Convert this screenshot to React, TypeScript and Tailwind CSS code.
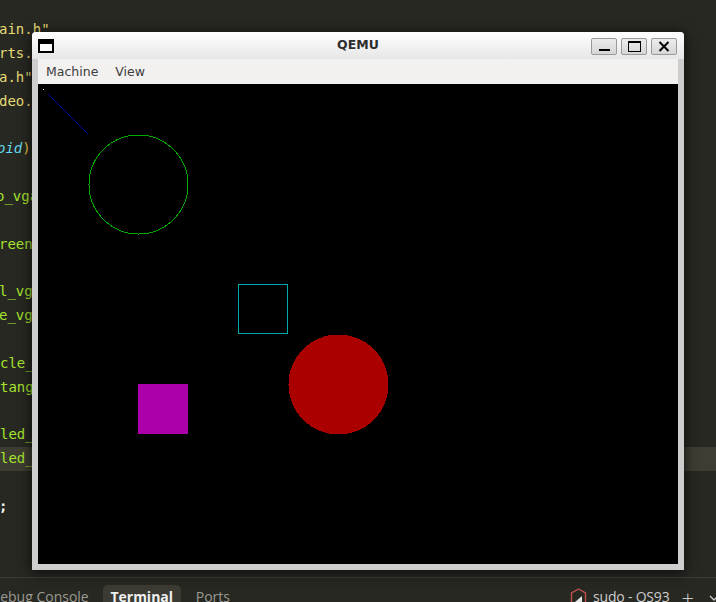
import React from "react";

type Line = { parts: { t: string; c: string }[]; ml: string; hl?: boolean };

const Y = "text-[#e6db74]";
const G = "text-[#a6e22e]";

const lines: Line[] = [
  { parts: [{ t: 'ain.h"', c: Y }], ml: "ml-[-1px]" },
  { parts: [{ t: 'rts.h"', c: Y }], ml: "ml-[-1px]" },
  { parts: [{ t: 'a.h"', c: Y }], ml: "ml-[-1px]" },
  { parts: [{ t: 'deo.h"', c: Y }], ml: "ml-[-1px]" },
  { parts: [], ml: "ml-0" },
  {
    parts: [
      { t: "oid", c: "text-[#66d9ef] italic" },
      { t: ")", c: "text-[#e8c547]" },
      { t: " {", c: "text-[#f8f8f2]" },
    ],
    ml: "ml-[-3px]",
  },
  { parts: [], ml: "ml-0" },
  { parts: [{ t: "o_vga();", c: G }], ml: "ml-[-4px]" },
  { parts: [], ml: "ml-0" },
  { parts: [{ t: "reen();", c: G }], ml: "ml-[-1px]" },
  { parts: [], ml: "ml-0" },
  { parts: [{ t: "l_vga();", c: G }], ml: "ml-[-1px]" },
  { parts: [{ t: "e_vga();", c: G }], ml: "ml-[-1px]" },
  { parts: [], ml: "ml-0" },
  { parts: [{ t: "cle_vga(", c: G }], ml: "ml-0" },
  { parts: [{ t: "tangle_v", c: G }], ml: "ml-0" },
  { parts: [], ml: "ml-0" },
  { parts: [{ t: "led_circ", c: G }], ml: "ml-0" },
  { parts: [{ t: "led_rect", c: G }], ml: "ml-0", hl: true },
  { parts: [], ml: "ml-0" },
  { parts: [{ t: ";", c: "text-[#f8f8f2] font-bold" }], ml: "ml-[-1px]" },
];

function TitleIcon() {
  return (
    <div className="w-[16px] h-[14px] border-2 border-black bg-white flex flex-col">
      <div className="h-[3px] bg-black" />
    </div>
  );
}

function WinButton({ children }: { children: React.ReactNode }) {
  return (
    <div className="w-[26px] h-[17px] rounded-[2px] border border-[#9a9a9a] bg-gradient-to-b from-[#ececec] to-[#d6d6d6] flex items-center justify-center">
      {children}
    </div>
  );
}

function QemuWindow() {
  return (
    <div className="absolute left-[32px] top-[32px] w-[652px] h-[538px] rounded-t-[4px] bg-[#cecece] shadow-[0_2px_14px_rgba(0,0,0,0.75)] flex flex-col">
      <div className="h-[27px] rounded-t-[4px] bg-gradient-to-b from-white to-[#e6e6e6] flex items-center pl-[6px] pr-[7px] relative">
        <TitleIcon />
        <div className="absolute inset-0 flex items-center justify-center pointer-events-none">
          <span className="font-['DejaVu_Sans',sans-serif] font-bold text-[12.5px] text-[#2e2e2e]">QEMU</span>
        </div>
        <div className="ml-auto flex gap-[4px] pt-[1px]">
          <WinButton>
            <div className="w-[11px] h-[2px] bg-black mt-[7px]" />
          </WinButton>
          <WinButton>
            <div className="w-[13px] h-[11px] border border-black flex flex-col">
              <div className="h-[1px] bg-black" />
            </div>
          </WinButton>
          <WinButton>
            <svg width="12" height="11" viewBox="0 0 12 11">
              <path d="M1.5 1 L10.5 10 M10.5 1 L1.5 10" stroke="#000" strokeWidth="2" />
            </svg>
          </WinButton>
        </div>
      </div>
      <div className="flex flex-col px-[6px] pb-[6px] flex-1">
        <div className="h-[25px] bg-[#f2f1f0] flex items-center pt-[1px] font-['DejaVu_Sans',sans-serif] text-[12.5px] text-[#3c3c3c]">
          <span className="ml-[8px]">Machine</span>
          <span className="ml-[17px]">View</span>
        </div>
        <div className="w-[640px] h-[480px] bg-black">
          <svg width="640" height="480" viewBox="0 0 640 480" shapeRendering="crispEdges">
            <rect x="0" y="0" width="640" height="480" fill="#000" />
            <rect x="5" y="5" width="1" height="1" fill="#fff" />
            <line x1="10.5" y1="10.5" x2="50.5" y2="50.5" stroke="#0000aa" strokeWidth="1" />
            <circle cx="100.5" cy="100.5" r="49.5" stroke="#00aa00" strokeWidth="1" fill="none" />
            <rect x="200.5" y="200.5" width="49" height="49" stroke="#00aaaa" strokeWidth="1" fill="none" />
            <circle cx="300.5" cy="300.5" r="50" fill="#aa0000" />
            <rect x="100" y="300" width="50" height="50" fill="#aa00aa" />
          </svg>
        </div>
      </div>
    </div>
  );
}

export default function App() {
  return (
    <div className="relative w-[716px] h-[602px] overflow-hidden bg-[#272822] flex flex-col">
      <div className="h-[577px] shrink-0 pt-[18px] font-['DejaVu_Sans_Mono',monospace] text-[14px]">
        {lines.map((l, i) => (
          <div
            key={i}
            className={`h-[23.85px] leading-[23.85px] whitespace-pre ${l.hl ? "bg-[#3e3d32]" : ""}`}
          >
            <div className={l.ml}>
              {l.parts.map((p, j) => (
                <span key={j} className={p.c}>
                  {p.t}
                </span>
              ))}
            </div>
          </div>
        ))}
      </div>
      <div className="h-[40px] shrink-0 border-t border-[#3b3c35] flex items-start pt-[7px] font-['Open_Sans',sans-serif] text-[14px] text-[#9a9a93]">
        <div className="ml-[-10px] leading-[20px] pt-[2px]">Debug Console</div>
        <div className="ml-[14px] h-[30px] w-[78px] rounded-t-[5px] bg-[#3b3b34] flex justify-center pt-[2px]">
          <span className="font-bold text-[#f0f0f0] leading-[20px]">Terminal</span>
        </div>
        <div className="ml-[15px] leading-[20px] pt-[2px]">Ports</div>
        <div className="ml-auto flex items-start pt-[2px]">
          <svg width="17" height="20" viewBox="0 0 17 20" className="mt-[1px]">
            <path d="M8.5 1 L15.5 5 L15.5 15 L8.5 19 L1.5 15 L1.5 5 Z" fill="none" stroke="#c0504d" strokeWidth="1.4" />
            <path d="M5 14 L12 8 L12 14 Z" fill="#e8e8e8" />
          </svg>
          <span className="ml-[6px] leading-[20px] text-[#cccccc] tracking-[-0.2px]">sudo - OS93</span>
          <span className="ml-[12px] text-[22px] leading-[20px] font-light text-[#cccccc]">+</span>
          <svg width="12" height="12" viewBox="0 0 12 12" className="ml-[14px] mt-[5px] mr-[-4px]">
            <path d="M2 4 L6 8 L10 4" fill="none" stroke="#cccccc" strokeWidth="1.3" />
          </svg>
        </div>
      </div>
      <QemuWindow />
    </div>
  );
}
